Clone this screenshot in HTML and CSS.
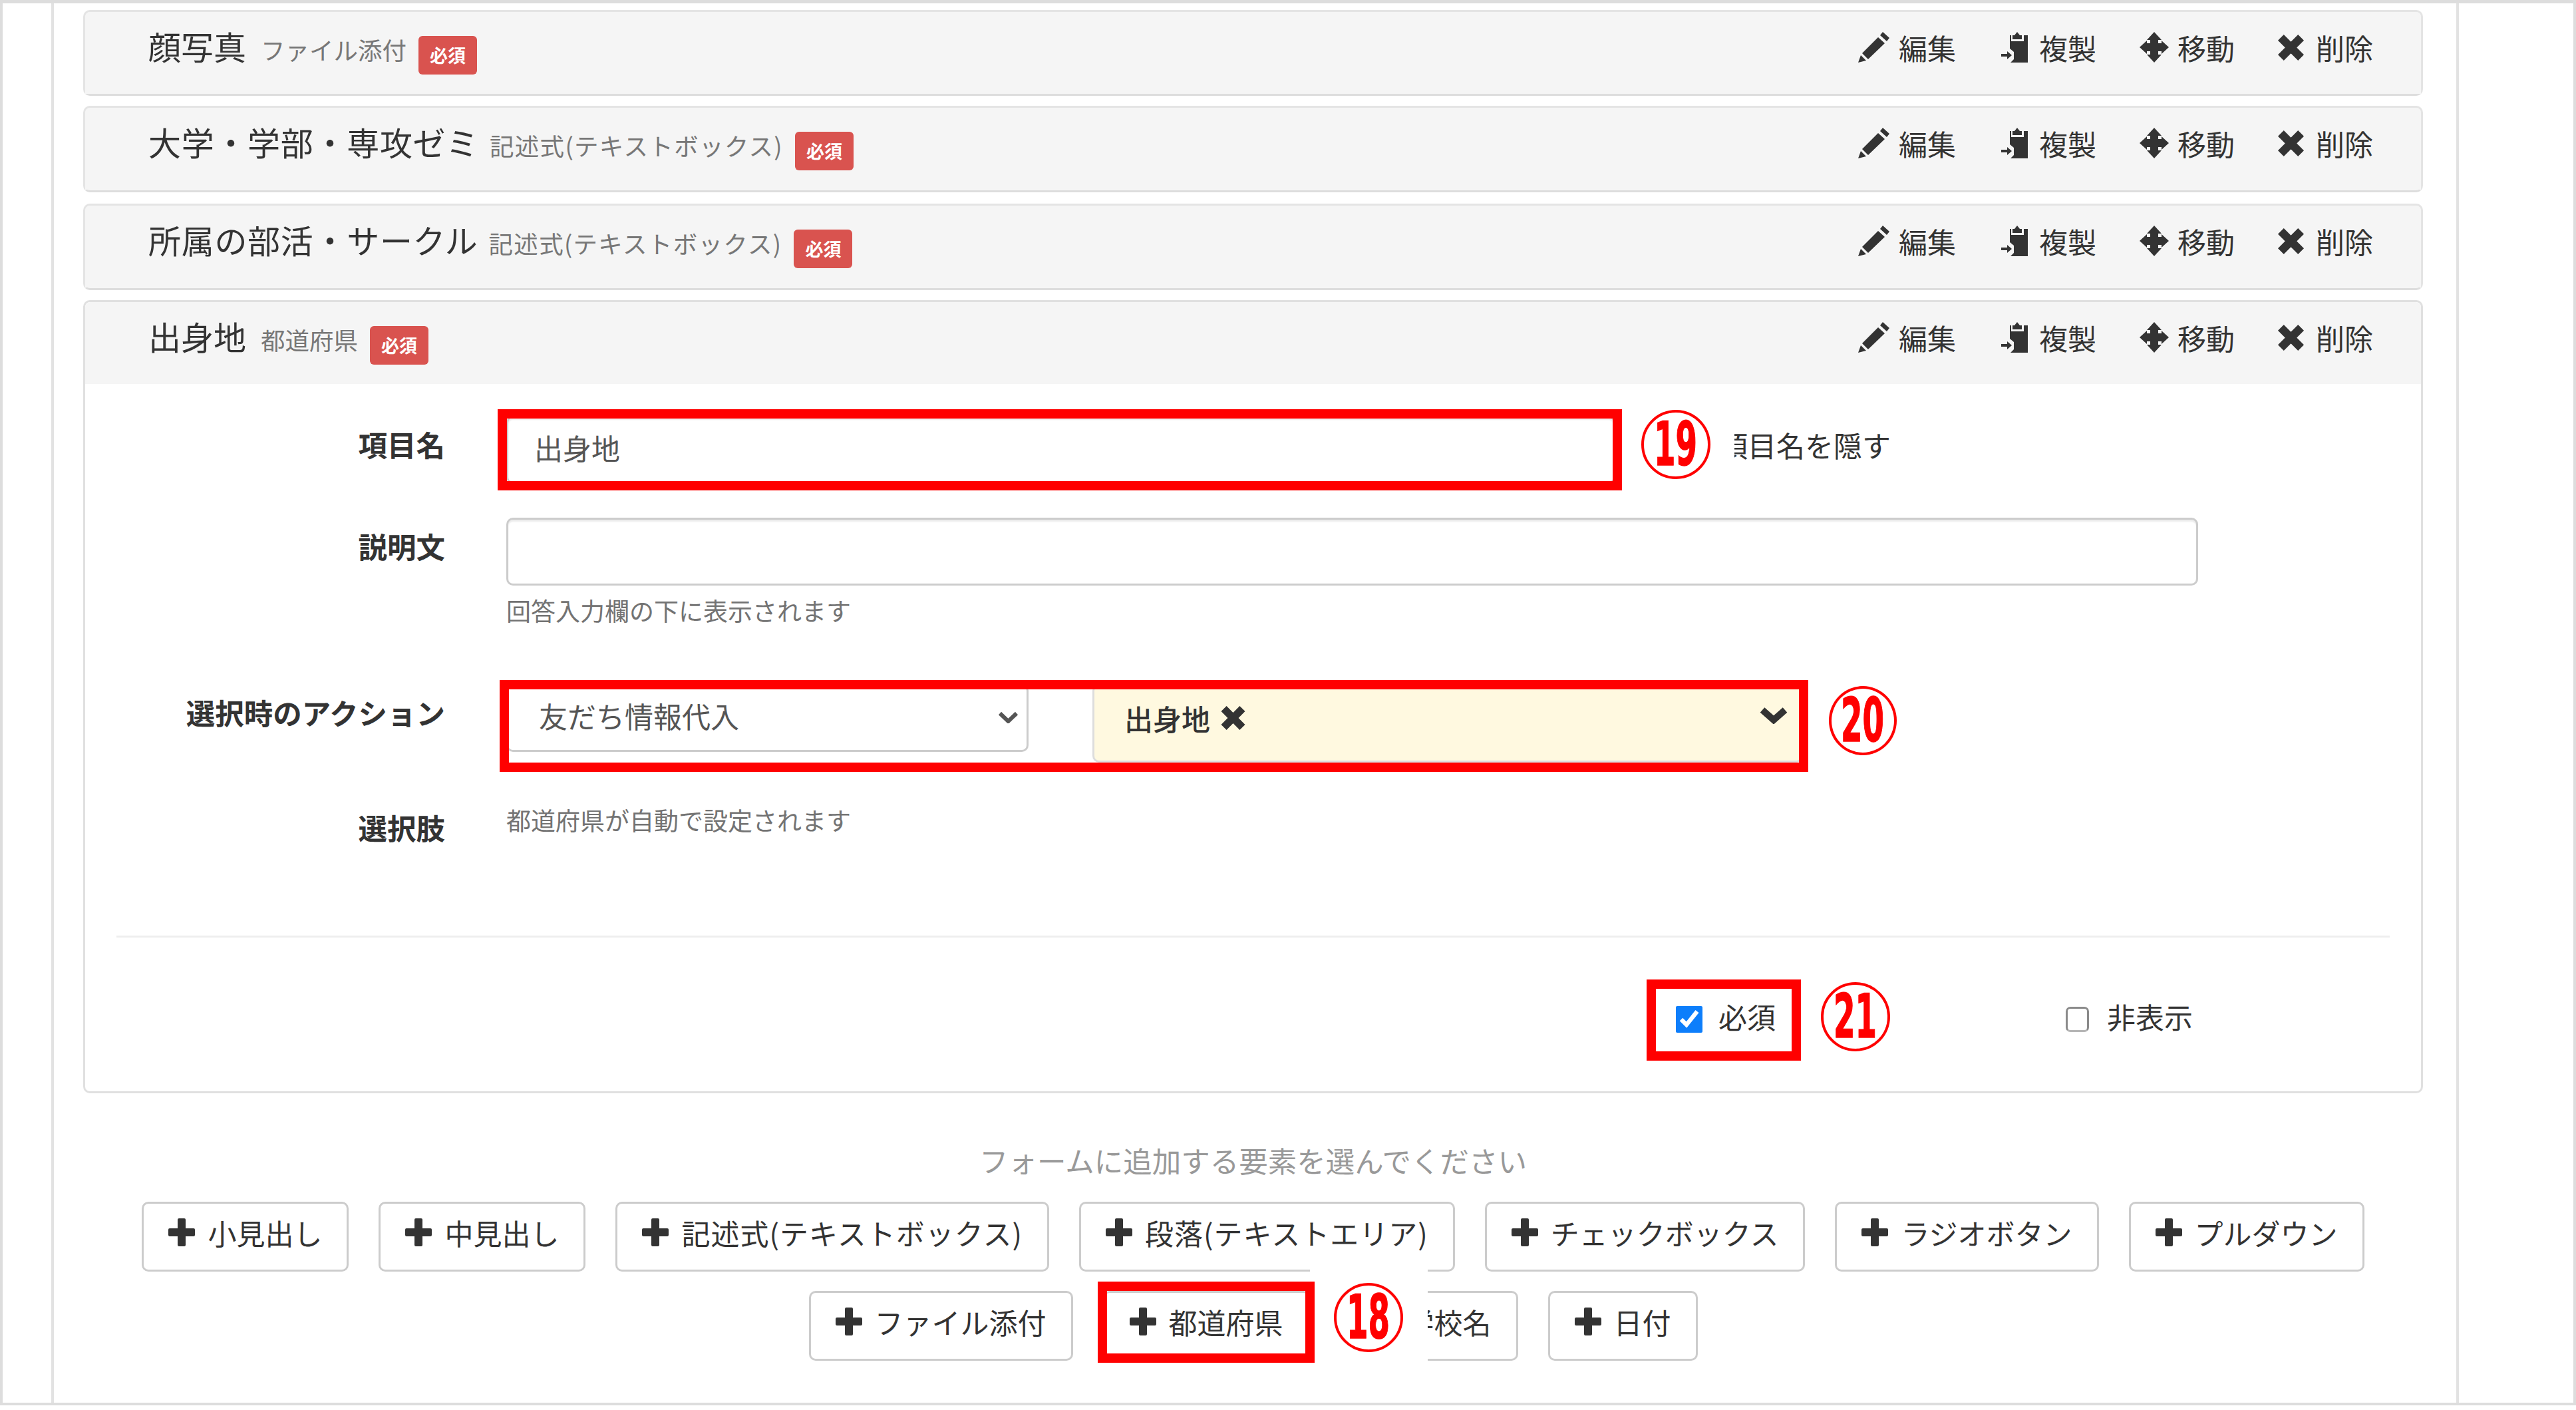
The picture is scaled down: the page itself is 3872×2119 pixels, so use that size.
FILE: index.html
```html
<!DOCTYPE html>
<html lang="ja">
<head>
  <meta charset="UTF-8">
  <title>フォーム編集</title>
  <link rel="stylesheet" href="styles.css">
</head>
<body>
  <svg class="defs" width="0" height="0">
    <symbol id="i-pencil" viewBox="0 0 48 46">
      <path d="M37 0 L47 9 L43 14 L33 5 Z M30 8 L40 17 L15 41 L6 32 Z M4 35 L12 43 L0 46 Z"/>
    </symbol>
    <symbol id="i-copy" viewBox="0 0 44 46">
      <path d="M27 0 L31 5 L34 5 L34 11 L20 11 L20 5 L23 5 Z M16 5 L18 5 L18 14 L37 14 L37 5 L43 5 L43 46 L17 46 L22 41 L22 30 L16 25 Z M3 33 L12 33 L12 29 L19 35 L12 41 L12 37 L3 37 Z"/>
    </symbol>
    <symbol id="i-move" viewBox="0 0 44 46">
      <path d="M22 0 L33 12 L28 12 L28 17 L33 17 L33 13 L44 23 L33 33 L33 29 L28 29 L28 34 L33 34 L22 46 L11 34 L16 34 L16 29 L11 29 L11 33 L0 23 L11 13 L11 17 L16 17 L16 12 L11 12 Z"/>
    </symbol>
    <symbol id="i-x" viewBox="0 0 40 40">
      <path d="M9 0 L20 11 L31 0 L40 9 L29 20 L40 31 L31 40 L20 29 L9 40 L0 31 L11 20 L0 9 Z"/>
    </symbol>
    <symbol id="i-plus" viewBox="0 0 40 42">
      <path d="M14 2 Q14 0 16 0 L24 0 Q26 0 26 2 L26 15 L38 15 Q40 15 40 17 L40 25 Q40 27 38 27 L26 27 L26 40 Q26 42 24 42 L16 42 Q14 42 14 40 L14 27 L2 27 Q0 27 0 25 L0 17 Q0 15 2 15 L14 15 Z"/>
    </symbol>
  </svg>

  <div class="frame">
    <div class="page">

      <div class="panel panel-first">
        <div class="panel-head">
          <span class="title">顔写真</span><span class="sub">ファイル添付</span><span class="badge">必須</span>
          <div class="actions">
            <span class="action"><svg class="ic-pencil"><use href="#i-pencil"/></svg>編集</span>
            <span class="action"><svg class="ic-copy"><use href="#i-copy"/></svg>複製</span>
            <span class="action"><svg class="ic-move"><use href="#i-move"/></svg>移動</span>
            <span class="action"><svg class="ic-x"><use href="#i-x"/></svg>削除</span>
          </div>
        </div>
      </div>

      <div class="panel">
        <div class="panel-head">
          <span class="title title-long">大学・学部・専攻ゼミ</span><span class="sub sub-wide">記述式(テキストボックス)</span><span class="badge">必須</span>
          <div class="actions">
            <span class="action"><svg class="ic-pencil"><use href="#i-pencil"/></svg>編集</span>
            <span class="action"><svg class="ic-copy"><use href="#i-copy"/></svg>複製</span>
            <span class="action"><svg class="ic-move"><use href="#i-move"/></svg>移動</span>
            <span class="action"><svg class="ic-x"><use href="#i-x"/></svg>削除</span>
          </div>
        </div>
      </div>

      <div class="panel panel-third">
        <div class="panel-head">
          <span class="title title-long">所属の部活・サークル</span><span class="sub sub-wide">記述式(テキストボックス)</span><span class="badge">必須</span>
          <div class="actions">
            <span class="action"><svg class="ic-pencil"><use href="#i-pencil"/></svg>編集</span>
            <span class="action"><svg class="ic-copy"><use href="#i-copy"/></svg>複製</span>
            <span class="action"><svg class="ic-move"><use href="#i-move"/></svg>移動</span>
            <span class="action"><svg class="ic-x"><use href="#i-x"/></svg>削除</span>
          </div>
        </div>
      </div>

      <div class="panel panel-open">
        <div class="panel-head">
          <span class="title">出身地</span><span class="sub">都道府県</span><span class="badge">必須</span>
          <div class="actions">
            <span class="action"><svg class="ic-pencil"><use href="#i-pencil"/></svg>編集</span>
            <span class="action"><svg class="ic-copy"><use href="#i-copy"/></svg>複製</span>
            <span class="action"><svg class="ic-move"><use href="#i-move"/></svg>移動</span>
            <span class="action"><svg class="ic-x"><use href="#i-x"/></svg>削除</span>
          </div>
        </div>

        <div class="panel-body">
          <div class="form-row">
            <div class="form-label">項目名</div>
            <div class="field field-name">出身地</div>
            <label class="check check-hide"><input type="checkbox">項目名を隠す</label>
          </div>

          <div class="form-row form-row-desc">
            <div class="form-label">説明文</div>
            <div class="form-col">
              <div class="field field-wide"></div>
              <div class="help help-desc">回答入力欄の下に表示されます</div>
            </div>
          </div>

          <div class="form-row form-row-action">
            <div class="form-label">選択時のアクション</div>
            <div class="field select-action">友だち情報代入
              <svg class="chev-thin" viewBox="0 0 33 18"><path d="M4 3 L16.500 15 L29 3"/></svg>
            </div>
            <div class="select-value">
              <span>出身地</span>
              <svg class="ic-value-x"><use href="#i-x"/></svg>
              <svg class="chev-bold" viewBox="0 0 44 26"><path d="M5 5 L22 20 L39 5"/></svg>
            </div>
          </div>

          <div class="form-row form-row-choice">
            <div class="form-label form-label-low">選択肢</div>
            <div class="help">都道府県が自動で設定されます</div>
          </div>

          <div class="panel-foot">
            <label class="check check-required"><input type="checkbox" checked>必須</label>
            <label class="check check-hidden"><input type="checkbox">非表示</label>
          </div>
        </div>
      </div>

      <p class="add-hint">フォームに追加する要素を選んでください</p>

      <div class="add-buttons">
        <span class="add-btn"><svg><use href="#i-plus"/></svg>小見出し</span>
        <span class="add-btn"><svg><use href="#i-plus"/></svg>中見出し</span>
        <span class="add-btn add-btn-wide"><svg><use href="#i-plus"/></svg>記述式(テキストボックス)</span>
        <span class="add-btn add-btn-wide"><svg><use href="#i-plus"/></svg>段落(テキストエリア)</span>
        <span class="add-btn"><svg><use href="#i-plus"/></svg>チェックボックス</span>
        <span class="add-btn"><svg><use href="#i-plus"/></svg>ラジオボタン</span>
        <span class="add-btn"><svg><use href="#i-plus"/></svg>プルダウン</span>
        <span class="add-btn"><svg><use href="#i-plus"/></svg>ファイル添付</span>
        <span class="add-btn"><svg><use href="#i-plus"/></svg>都道府県</span>
        <span class="add-btn"><svg><use href="#i-plus"/></svg>学校名</span>
        <span class="add-btn"><svg><use href="#i-plus"/></svg>日付</span>
      </div>
    </div>

    <!-- numbered callouts drawn on top of the screenshot -->
    <div class="cover cover-19"></div>
    <div class="cover cover-18"></div>
    <div class="mark mark-19"></div>
    <div class="mark mark-20"></div>
    <div class="mark mark-21"></div>
    <div class="mark mark-18"></div>
    <div class="num num-19"><span>19</span></div>
    <div class="num num-20"><span>20</span></div>
    <div class="num num-21"><span>21</span></div>
    <div class="num num-18"><span>18</span></div>
  </div>
</body>
</html>
```

FILE: styles.css
```css
* {
  box-sizing: border-box;
}
body {
  margin: 0;
  background: #fff;
  color: #333;
  font-family: "Noto Sans CJK JP", "Noto Sans", sans-serif;
  font-size: 43px;
  line-height: 50px;
}
.defs {
  position: absolute;
}
svg {
  fill: currentColor;
  flex: none;
}

/* page frame */
.frame {
  position: relative;
  width: 3872px;
  height: 2112px;
  border: 4px solid #ddd;
  border-top-width: 5px;
  padding: 0 172px 0 73px;
}
.page {
  height: 100%;
  border-left: 4px solid #e2e2e2;
  border-right: 4px solid #e2e2e2;
  padding: 10px 50px 0 44px;
}

/* panels */
.panel {
  height: 130px;
  margin-bottom: 15px;
  background: #f5f5f5;
  border: 3px solid #e4e4e4;
  border-bottom-color: #ddd;
  border-radius: 10px;
}
.panel-first {
  height: 129px;
}
.panel-third {
  margin-top: 17px;
}
.panel-open {
  height: 1192px;
  background: #fff;
  border-color: #e0e0e0;
  margin-bottom: 0;
}
.panel-head {
  display: flex;
  align-items: flex-start;
  height: 123px;
  padding: 26px 72px 0 95px;
  background: #f5f5f5;
  border-radius: 8px 8px 0 0;
}
.title {
  font-size: 49px;
  line-height: 50px;
  margin-right: 22px;
}
.title-long {
  letter-spacing: 0.700px;
  margin-right: 16px;
}
.sub {
  font-size: 36.500px;
  line-height: 50px;
  margin-top: 6px;
  color: #777;
  margin-right: 18px;
}
.sub-wide {
  letter-spacing: 1.300px;
}
.badge {
  width: 88px;
  height: 58px;
  margin-top: 10px;
  border-radius: 6px;
  background: #d9534f;
  color: #fff;
  font-size: 27px;
  font-weight: 700;
  line-height: 58px;
  text-align: center;
}
.actions {
  display: flex;
  gap: 65px;
  margin: 2px 0 0 auto;
}
.action {
  display: flex;
  align-items: center;
  gap: 13px;
  font-size: 43px;
  line-height: 50px;
}
.ic-pencil {
  width: 48px;
  height: 46px;
}
.ic-copy {
  width: 44px;
  height: 46px;
  margin-right: 3px;
}
.ic-move {
  width: 44px;
  height: 46px;
}
.ic-x {
  width: 39px;
  height: 39px;
  margin-right: 5px;
}

/* form */
.panel-body {
  padding-top: 48px;
}
.form-row {
  display: flex;
  align-items: flex-start;
}
.form-row-desc {
  margin-top: 51px;
}
.form-row-action {
  margin-top: 86px;
}
.form-row-choice {
  margin-top: 61px;
}
.form-label {
  flex: none;
  width: 541px;
  margin-right: 92px;
  padding-top: 18px;
  font-size: 43.500px;
  font-weight: 700;
  text-align: right;
}
.form-label-low {
  padding-top: 12px;
}
.field {
  height: 102px;
  padding: 0 39px 8px;
  display: flex;
  align-items: center;
  background: #fff;
  border: 3px solid #ccc;
  border-radius: 10px;
  box-shadow: inset 0 3px 2px rgba(0, 0, 0, 0.08);
  color: #555;
}
.field-name {
  width: 1667px;
}
.field-wide {
  width: 2543px;
}
.form-col {
  display: flex;
  flex-direction: column;
}
.help {
  font-size: 37px;
  color: #737373;
}
.help-desc {
  margin-top: 12px;
}
.check {
  display: flex;
  align-items: flex-start;
  font-size: 43px;
}
.check input {
  margin: 0;
  flex: none;
  accent-color: #0d7efb;
}
.check-hide {
  margin: 18px 0 0 90px;
  gap: 26px;
}
.check-hide input {
  width: 40px;
  height: 40px;
}
.select-action {
  width: 785px;
  padding: 0 11px 8px 46px;
  box-shadow: none;
  justify-content: space-between;
}
.chev-thin {
  width: 33px;
  height: 18px;
  margin-top: 5px;
  fill: none;
  stroke: #555;
  stroke-width: 6;
}
.select-value {
  display: flex;
  align-items: flex-start;
  width: 1068px;
  height: 118px;
  margin-left: 96px;
  padding: 23px 19px 0 45px;
  background: #fff9e0;
  border: 3px solid #ddd;
  border-radius: 10px;
  font-weight: 500;
}
.ic-value-x {
  width: 39px;
  height: 36px;
  margin: 7px 0 0 15px;
}
.chev-bold {
  width: 44px;
  height: 26px;
  margin: 8px 0 0 auto;
  fill: none;
  stroke: #333;
  stroke-width: 10;
}
.panel-foot {
  display: flex;
  justify-content: flex-end;
  gap: 436px;
  height: 234px;
  margin: 137px 47px 0 47px;
  padding: 93px 296px 0 0;
  border-top: 3px solid #eee;
}
.check-required {
  gap: 24px;
}
.check-required input {
  width: 40px;
  height: 40px;
  margin-top: 10px;
}
.check-hidden {
  gap: 27px;
}
.check-hidden input {
  appearance: none;
  width: 35px;
  height: 38px;
  margin-top: 11px;
  background: #fff;
  border: 3px solid #8a8a8a;
  border-bottom-color: #b5b5b5;
  border-radius: 7px;
}

/* add buttons */
.add-hint {
  margin: 76px 0 37px;
  font-size: 43.500px;
  color: #999;
  text-align: center;
}
.add-buttons {
  display: flex;
  flex-wrap: wrap;
  justify-content: center;
  gap: 29px 45px;
}
.add-btn {
  display: inline-flex;
  align-items: center;
  gap: 19px;
  height: 105px;
  padding: 0 37px 13px;
  background: #fff;
  border: 3px solid #ccc;
  border-radius: 10px;
}
.add-btn-wide {
  letter-spacing: 1px;
}
.add-btn svg {
  width: 40px;
  height: 42px;
}

/* callouts */
.mark {
  position: absolute;
  border: 14px solid #f00;
}
.mark-19 {
  left: 744px;
  top: 610px;
  width: 1690px;
  height: 122px;
}
.mark-20 {
  left: 747px;
  top: 1017px;
  width: 1967px;
  height: 138px;
}
.mark-21 {
  left: 2471px;
  top: 1467px;
  width: 232px;
  height: 122px;
}
.mark-18 {
  left: 1646px;
  top: 1921px;
  width: 326px;
  height: 122px;
}
.cover {
  position: absolute;
  background: #fff;
}
.cover-19 {
  left: 2434px;
  top: 605px;
  width: 169px;
  height: 115px;
}
.cover-18 {
  left: 1965px;
  top: 1902px;
  width: 177px;
  height: 150px;
}
.num {
  position: absolute;
  display: flex;
  align-items: center;
  justify-content: center;
  border: 4px solid #f00;
  border-radius: 50%;
  background: #fff;
  color: #f00;
  font-family: "DejaVu Sans", sans-serif;
  font-size: 90px;
  font-weight: 700;
  line-height: 1;
  -webkit-text-stroke: 1.500px #f00;
}
.num span {
  display: block;
  transform: scaleX(0.52);
}
.num-19 {
  left: 2463px;
  top: 611px;
  width: 104px;
  height: 104px;
}
.num-20 {
  left: 2745px;
  top: 1026px;
  width: 102px;
  height: 104px;
}
.num-21 {
  left: 2733px;
  top: 1471px;
  width: 104px;
  height: 104px;
}
.num-18 {
  left: 2001px;
  top: 1923px;
  width: 104px;
  height: 104px;
}
```
